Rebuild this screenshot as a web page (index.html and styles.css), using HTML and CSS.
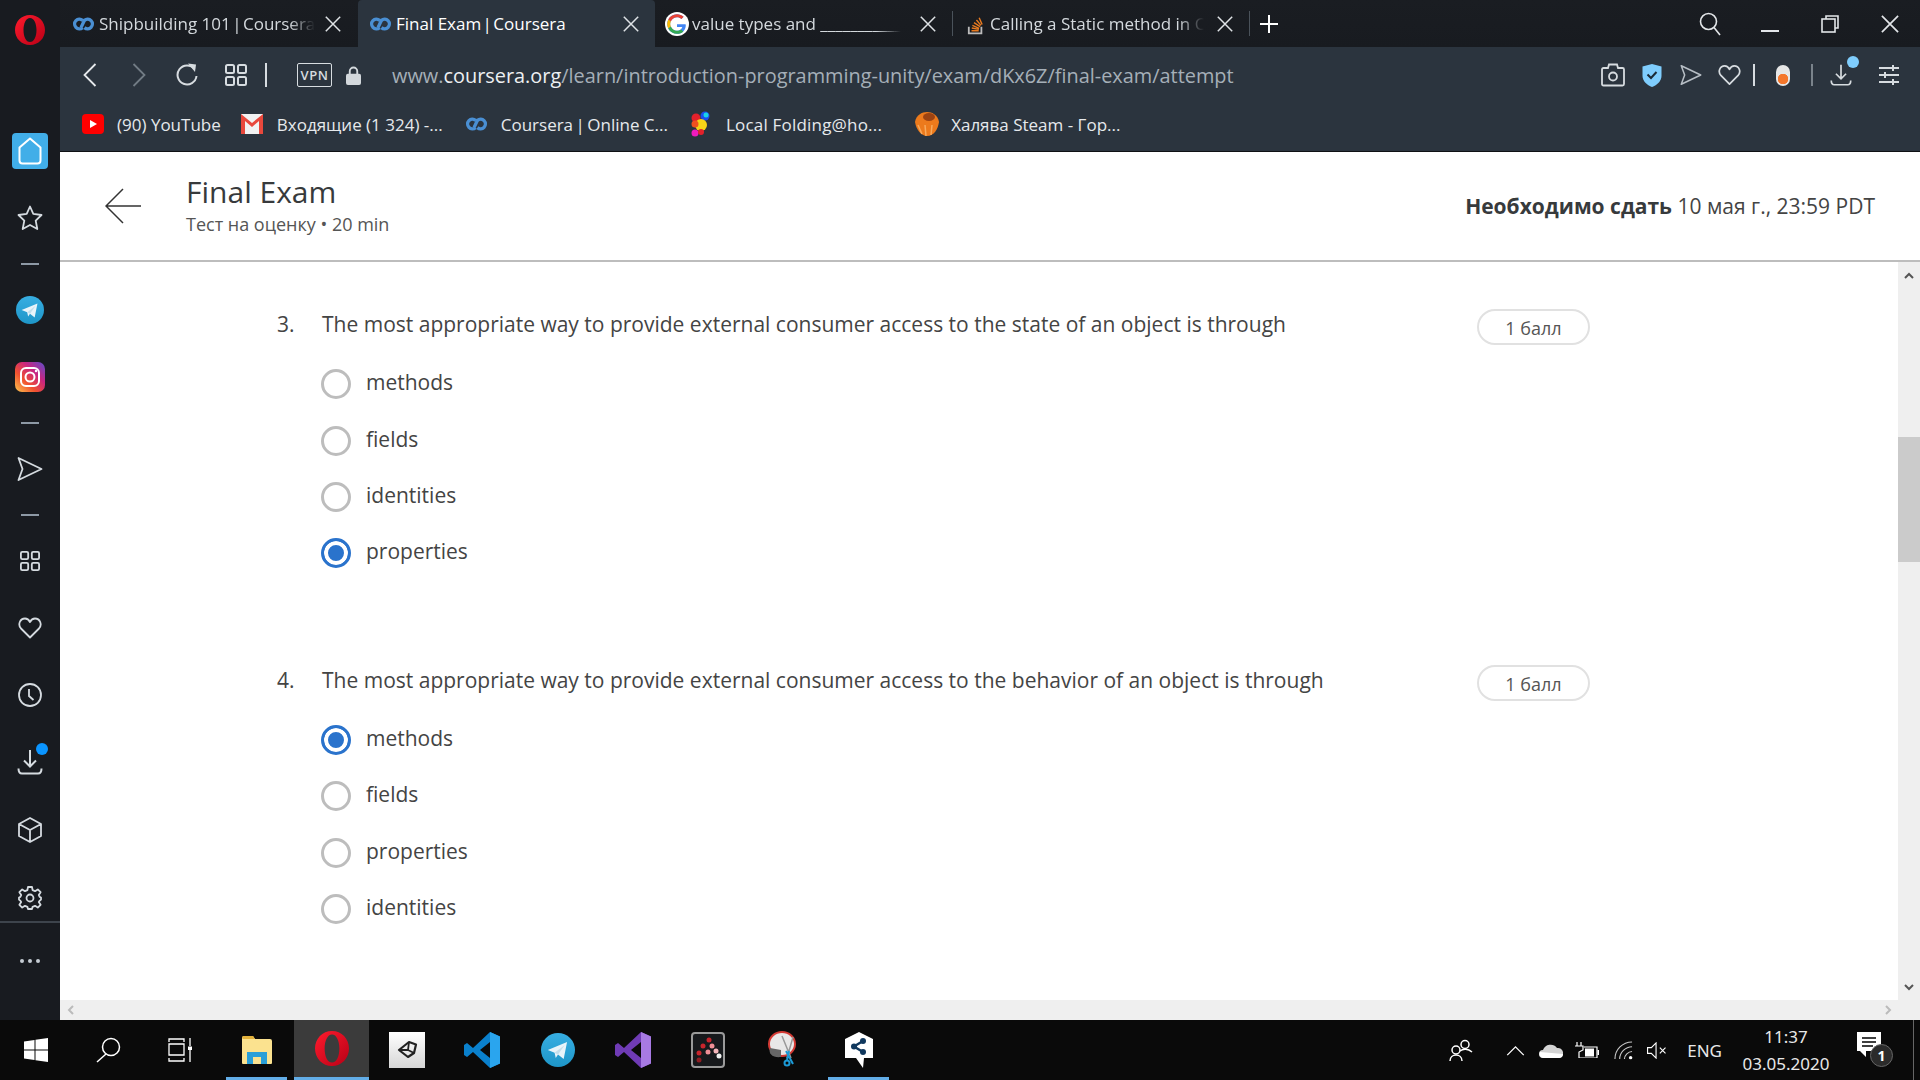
FILE: index.html
```html
<!DOCTYPE html>
<html lang="ru">
<head>
  <meta charset="UTF-8">
  <title>Final Exam | Coursera</title>
  <link rel="stylesheet" href="styles.css">
</head>
<body>
  <svg class="sprite" aria-hidden="true">
    <defs>
      <linearGradient id="teleGrad" x1="0" y1="0" x2="0" y2="1"><stop offset="0" stop-color="#37aee2"/><stop offset="1" stop-color="#1e96c8"/></linearGradient>
      <linearGradient id="instaGrad" x1="0" y1="1" x2="1" y2="0"><stop offset="0" stop-color="#fdc94f"/><stop offset=".35" stop-color="#f0512f"/><stop offset=".65" stop-color="#c9257f"/><stop offset="1" stop-color="#5a4fcf"/></linearGradient>
      <linearGradient id="operaGrad" x1="0" y1="0" x2="1" y2="1"><stop offset="0" stop-color="#ff1b2d"/><stop offset="1" stop-color="#b80016"/></linearGradient>
      <linearGradient id="unityGrad" x1="0" y1="0" x2="0" y2="1"><stop offset="0" stop-color="#fff"/><stop offset="1" stop-color="#d6d6d6"/></linearGradient>
    </defs>
    <symbol id="coursera" viewBox="0 0 24 14"><path d="M11 3.200A5 5 0 1 0 11 10.800M13 10.800A5 5 0 1 0 13 3.200L9.500 10.500" fill="none" stroke="#4a8fd3" stroke-width="3.500"/></symbol>
    <symbol id="close" viewBox="0 0 16 16"><path d="M.8.800 15.200 15.200M15.200.800.800 15.200" fill="none" stroke="currentColor" stroke-width="1.500"/></symbol>
    <symbol id="opera" viewBox="0 0 30 36" preserveAspectRatio="none"><path fill-rule="evenodd" d="M15 0C23.500 0 30 8 30 18S23.500 36 15 36 0 28 0 18 6.500 0 15 0ZM15 3.500C11 3.500 8.500 10 8.500 18S11 32.500 15 32.500 21.500 26 21.500 18 19 3.500 15 3.500Z" fill="url(#operaGrad)"/></symbol>
    <symbol id="grid" viewBox="0 0 22 22"><g fill="none" stroke="currentColor" stroke-width="2"><rect x="1" y="1" width="8" height="8" rx="1.500"/><rect x="13" y="1" width="8" height="8" rx="1.500"/><rect x="1" y="13" width="8" height="8" rx="1.500"/><rect x="13" y="13" width="8" height="8" rx="1.500"/></g></symbol>
    <symbol id="send" viewBox="0 0 26 26"><path d="M1.500 2 24.500 13 1.500 24 5.500 13Z" fill="none" stroke="currentColor" stroke-width="1.800" stroke-linejoin="round"/></symbol>
    <symbol id="heart" viewBox="0 0 24 22"><path d="M12 20.500 3 11.500C-.5 7.500 2 1.500 7 1.500 9.300 1.500 11 3 12 5 13 3 14.700 1.500 17 1.500 22 1.500 24.500 7.500 21 11.500Z" fill="none" stroke="currentColor" stroke-width="1.800" stroke-linejoin="round"/></symbol>
    <symbol id="download" viewBox="0 0 26 26"><path d="M13 1V17M7 11.500 13 17.500 19 11.500M1.500 19.500C1.500 23 3 24.500 5 24.500H21C23 24.500 24.500 23 24.500 19.500" fill="none" stroke="currentColor" stroke-width="2"/></symbol>
    <symbol id="telegram" viewBox="0 0 30 30"><circle cx="15" cy="15" r="15" fill="url(#teleGrad)"/><path d="M6 15 23 8 20 23 15 19 13 22 12 17.500Z" fill="#e8f4fa"/><path d="M12 17.500 21 10.500 15 19Z" fill="#c4dfec"/></symbol>
  </svg>

  <div class="window">
    <aside class="sidebar">
      <div class="side-logo"><svg class="logo-opera"><use href="#opera"/></svg></div>
      <div class="side-cell"><span class="home-tile"><svg width="24" height="28" viewBox="0 0 24 28"><path d="M12 1.500 22.500 10.500V23.500Q22.500 26.500 19.500 26.500H4.500Q1.500 26.500 1.500 23.500V10.500Z" fill="none" stroke="#fff" stroke-width="2" stroke-linejoin="round"/></svg></span></div>
      <div class="side-cell"><svg width="26" height="26" viewBox="0 0 26 26"><path d="M13 1.500 16.300 8.800 24.500 10 18.700 15.600 20.300 24 13 20 5.700 24 7.300 15.600 1.500 10 9.700 8.800Z" fill="none" stroke="currentColor" stroke-width="1.800" stroke-linejoin="round"/></svg></div>
      <div class="side-dash"></div>
      <div class="side-cell"><svg width="28" height="28"><use href="#telegram"/></svg></div>
      <div class="side-cell">
        <svg width="30" height="30" viewBox="0 0 30 30"><rect width="30" height="30" rx="7" fill="url(#instaGrad)"/><rect x="6" y="6" width="18" height="18" rx="5" fill="none" stroke="#fff" stroke-width="2"/><circle cx="15" cy="15" r="4.500" fill="none" stroke="#fff" stroke-width="2"/><circle cx="21" cy="9" r="1.200" fill="#fff"/></svg>
      </div>
      <div class="side-dash"></div>
      <div class="side-cell"><svg width="26" height="26"><use href="#send"/></svg></div>
      <div class="side-dash"></div>
      <div class="side-cell"><svg width="24" height="20"><use href="#grid"/></svg></div>
      <div class="side-cell"><svg width="24" height="22"><use href="#heart"/></svg></div>
      <div class="side-cell"><svg width="24" height="24" viewBox="0 0 24 24"><circle cx="12" cy="12" r="11" fill="none" stroke="currentColor" stroke-width="1.800"/><path d="M11 6V13L15.500 17" fill="none" stroke="currentColor" stroke-width="1.800"/></svg></div>
      <div class="side-cell side-dl"><svg width="26" height="26"><use href="#download"/></svg><span class="dot dot-side"></span></div>
      <div class="side-cell"><svg width="24" height="26" viewBox="0 0 24 26"><path d="M12 1 23 7V19L12 25 1 19V7ZM1 7 12 13 23 7M12 13V25" fill="none" stroke="currentColor" stroke-width="1.800" stroke-linejoin="round"/></svg></div>
      <div class="side-cell side-gear"><svg width="24" height="24" viewBox="0 0 24 24"><circle cx="12" cy="12" r="3.500" fill="none" stroke="currentColor" stroke-width="1.800"/><path d="M10 1H14L14.600 4.200 17 5.200 19.800 3.400 22.600 6.200 20.800 9 21.800 11 23 11.500V13.500L21.800 14.600 20.800 16 22.600 18.800 19.800 21.600 17 19.800 14.600 20.800 14 23H10L9.400 20.800 7 19.800 4.200 21.600 1.400 18.800 3.200 16 2.200 14.600 1 13.500V11.500L2.200 11 3.200 9 1.400 6.200 4.200 3.400 7 5.200 9.400 4.200Z" fill="none" stroke="currentColor" stroke-width="1.800" stroke-linejoin="round"/></svg></div>
      <div class="side-more"><span></span><span></span><span></span></div>
    </aside>

    <div class="main">
      <div class="tabbar">
        <div class="tab tab-first">
          <svg class="favicon-co"><use href="#coursera"/></svg>
          <span class="tab-title fade">Shipbuilding 101 <span class="pipe">|</span> Coursera</span>
          <svg class="tab-close"><use href="#close"/></svg>
        </div>
        <div class="tab tab-active">
          <svg class="favicon-co"><use href="#coursera"/></svg>
          <span class="tab-title">Final Exam <span class="pipe">|</span> Coursera</span>
          <svg class="tab-close"><use href="#close"/></svg>
        </div>
        <div class="tab tab-google">
          <svg class="favicon-g" viewBox="0 0 24 24">
            <circle cx="12" cy="12" r="12" fill="#fff"/>
            <path d="M20.500 12.200H12V15H17.300C16.700 17.400 14.600 18.800 12 18.800 8.300 18.800 5.200 15.800 5.200 12S8.300 5.200 12 5.200C13.700 5.200 15.200 5.800 16.400 6.900L18.600 4.800C16.900 3.100 14.600 2.200 12 2.200 6.600 2.200 2.200 6.600 2.200 12S6.600 21.800 12 21.800C17.400 21.800 20.800 18 20.800 13.200 20.800 12.800 20.700 12.500 20.500 12.200Z" fill="#4285f4"/>
            <path d="M3.300 7.500 5.900 9.500C6.800 7 9.200 5.200 12 5.200 13.700 5.200 15.200 5.800 16.400 6.900L18.600 4.800C16.900 3.100 14.600 2.200 12 2.200 8.200 2.200 4.900 4.300 3.300 7.500Z" fill="#ea4335"/>
            <path d="M3.300 7.500C2.600 8.900 2.200 10.400 2.200 12S2.600 15.100 3.300 16.500L5.900 14.500C5.400 13.700 5.200 12.900 5.200 12S5.400 10.300 5.900 9.500Z" fill="#fbbc05"/>
            <path d="M3.300 16.500C4.900 19.700 8.200 21.800 12 21.800 14.600 21.800 16.800 20.900 18.400 19.400L16 17.400C14.900 18.300 13.500 18.800 12 18.800 9.200 18.800 6.800 17 5.900 14.500Z" fill="#34a853"/>
          </svg>
          <span class="tab-title fade">value types and ____________</span>
          <svg class="tab-close"><use href="#close"/></svg>
          <span class="tab-sep"></span>
        </div>
        <div class="tab tab-so">
          <svg class="favicon-so" viewBox="0 0 20 24"><path d="M2 15V22.500H16V15" fill="none" stroke="#bcbbbb" stroke-width="2"/><path d="M5 19.500H13M5.300 16.500 13.200 18M6 13.500 13.500 16.800M7.800 10.500 14.500 15M10.500 7.500 15.500 13.500M13.500 5 16.800 12.500" fill="none" stroke="#e87a20" stroke-width="1.600"/></svg>
          <span class="tab-title fade">Calling a Static method in C</span>
          <svg class="tab-close"><use href="#close"/></svg>
          <span class="tab-sep"></span>
        </div>
        <svg class="tab-plus" viewBox="0 0 18 18"><path d="M9 0V18M0 9H18" stroke="#fff" stroke-width="2"/></svg>
        <div class="window-controls">
          <svg class="wc-search" viewBox="0 0 22 24"><circle cx="9.500" cy="9.500" r="8" fill="none" stroke="currentColor" stroke-width="1.600"/><path d="M15 15.500 21 23" stroke="currentColor" stroke-width="1.600"/></svg>
          <span class="wc-cell"><span class="wc-min"></span></span>
          <span class="wc-cell"><svg width="18" height="18" viewBox="0 0 18 18"><path d="M5 4V1H17V13H14" fill="none" stroke="currentColor" stroke-width="1.600"/><rect x="1" y="4" width="13" height="13" fill="none" stroke="currentColor" stroke-width="1.600"/></svg></span>
          <span class="wc-cell"><svg width="18" height="18"><use href="#close"/></svg></span>
        </div>
      </div>

      <div class="toolbar">
        <div class="addr-row">
          <span class="tool"><svg width="14" height="24" viewBox="0 0 14 24"><path d="M12.500 1 1.500 12 12.500 23" fill="none" stroke="#e6e9ec" stroke-width="1.800"/></svg></span>
          <span class="tool tool-dim"><svg width="14" height="24" viewBox="0 0 14 24"><path d="M1.500 1 12.500 12 1.500 23" fill="none" stroke="currentColor" stroke-width="1.800"/></svg></span>
          <span class="tool"><svg width="22" height="24" viewBox="0 0 22 24"><path d="M18.500 6A9.500 9.500 0 1 0 20.500 13" fill="none" stroke="currentColor" stroke-width="2"/><path d="M12 .500 20 1.500 19 9Z" fill="currentColor"/></svg></span>
          <span class="tool"><svg width="22" height="22"><use href="#grid"/></svg></span>
          <span class="bar-sep"></span>
          <span class="vpn">VPN</span>
          <svg class="lock" viewBox="0 0 16 20"><path d="M4 9V5.500A4 4 0 0 1 12 5.500V9" fill="none" stroke="#d3d8dc" stroke-width="2"/><rect y="8" width="16" height="12" rx="2" fill="#d3d8dc"/></svg>
          <span class="url">www.<b>coursera.org</b>/learn/introduction-programming-unity/exam/dKx6Z/final-exam/attempt</span>
          <div class="addr-tools">
            <span class="atool"><svg width="24" height="24" viewBox="0 0 24 24"><path d="M2.500 5H7L8 1.500H16L17 5H21.500Q23 5 23 6.500V21Q23 22.500 21.500 22.500H2.500Q1 22.500 1 21V6.500Q1 5 2.500 5Z" fill="none" stroke="currentColor" stroke-width="1.800"/><circle cx="12" cy="13.500" r="4" fill="none" stroke="currentColor" stroke-width="1.800"/></svg></span>
            <span class="atool"><svg width="20" height="24" viewBox="0 0 20 24"><path d="M10 1 19.500 3.500V13C19.500 18 15 22 10 24 5 22 .5 18 .5 13V3.500Z" fill="#7fcdfd"/><path d="M5.500 11.500 9 15 14.500 9" fill="none" stroke="#1c2a36" stroke-width="2"/></svg></span>
            <span class="atool atool-dim"><svg width="22" height="22"><use href="#send"/></svg></span>
            <span class="atool"><svg width="23" height="22"><use href="#heart"/></svg></span>
            <span class="a-sep"></span>
            <span class="toggle-cell"><span class="toggle"></span></span>
            <span class="a-sep a-sep-dim"></span>
            <span class="dl-cell"><svg width="22" height="24"><use href="#download"/></svg><span class="dot dot-top"></span></span>
            <span class="slider-cell"><svg width="20" height="20" viewBox="0 0 20 20"><path d="M0 3H20M0 10H20M0 17H20" stroke="currentColor" stroke-width="2"/><path d="M14 0V6M6 7V13M14 14V20" stroke="currentColor" stroke-width="2"/></svg></span>
          </div>
        </div>
        <div class="bookmarks">
          <span class="bm bm-yt">
            <svg width="22" height="20" viewBox="0 0 22 20"><rect width="22" height="20" rx="4" fill="#f00"/><path d="M8 6 15 10 8 14Z" fill="#fff"/></svg>
            <span>(90) YouTube</span>
          </span>
          <span class="bm bm-mail">
            <svg width="22" height="20" viewBox="0 0 22 20"><rect width="22" height="20" fill="#f2f2f2"/><path d="M0 0 11 9 22 0V20H18V7L11 13 4 7V20H0Z" fill="#e8483c"/></svg>
            <span>Входящие (1 324) -...</span>
          </span>
          <span class="bm bm-co">
            <svg class="favicon-co"><use href="#coursera"/></svg>
            <span>Coursera <span class="pipe">|</span> Online C...</span>
          </span>
          <span class="bm bm-fold">
            <svg width="20" height="26" viewBox="0 0 20 26"><circle cx="6" cy="7" r="4.500" fill="#e3212b"/><circle cx="15" cy="5" r="4.500" fill="#1b4ff0"/><circle cx="16" cy="4" r="2.500" fill="#19d3e8"/><circle cx="11" cy="14" r="6" fill="#f7d417"/><circle cx="5" cy="13" r="3.500" fill="#f2501f"/><circle cx="5" cy="22" r="3.500" fill="#f01bbe"/><circle cx="11" cy="21" r="3" fill="#e3212b"/></svg>
            <span>Local Folding@ho...</span>
          </span>
          <span class="bm bm-free">
            <svg width="26" height="26" viewBox="0 0 26 26"><path d="M1 11C2 4 8 1 13 1S24 4 25 11C24 18 20 25 13 25 7 25 2 18 1 11Z" fill="#ec7a1c"/><ellipse cx="15" cy="6" rx="6" ry="4" fill="#9c4312"/><path d="M4 14 8 23M11 14 12 25M18 14 17 24" stroke="#f7a95b" stroke-width="1.500"/></svg>
            <span>Халява Steam - Гор...</span>
          </span>
        </div>
      </div>

      <div class="page">
        <header class="page-head">
          <svg class="back" viewBox="0 0 36 36"><path d="M18 1 1 18 18 35M1 18H36" fill="none" stroke="#333" stroke-width="1.500"/></svg>
          <div class="head-text">
            <h1>Final Exam</h1>
            <p>Тест на оценку • 20 min</p>
          </div>
          <div class="due"><b>Необходимо сдать</b> 10 мая г., 23:59 PDT</div>
        </header>

        <div class="page-body">
          <div class="scroll-area">
            <div class="content">
              <section class="question">
                <div class="q-head">
                  <span class="q-num">3.</span>
                  <span class="q-text">The most appropriate way to provide external consumer access to the state of an object is through</span>
                  <span class="points">1 балл</span>
                </div>
                <label class="option"><input type="radio" name="q3"><span>methods</span></label>
                <label class="option"><input type="radio" name="q3"><span>fields</span></label>
                <label class="option"><input type="radio" name="q3"><span>identities</span></label>
                <label class="option"><input type="radio" name="q3" checked><span>properties</span></label>
              </section>
              <section class="question">
                <div class="q-head">
                  <span class="q-num">4.</span>
                  <span class="q-text">The most appropriate way to provide external consumer access to the behavior of an object is through</span>
                  <span class="points">1 балл</span>
                </div>
                <label class="option"><input type="radio" name="q4" checked><span>methods</span></label>
                <label class="option"><input type="radio" name="q4"><span>fields</span></label>
                <label class="option"><input type="radio" name="q4"><span>properties</span></label>
                <label class="option"><input type="radio" name="q4"><span>identities</span></label>
              </section>
            </div>
            <div class="vscroll">
              <svg class="arrow-v" viewBox="0 0 10 7"><path d="M1 6 5 2 9 6" fill="none" stroke="#555" stroke-width="2"/></svg>
              <span class="thumb"></span>
              <svg class="arrow-v arrow-end" viewBox="0 0 10 7"><path d="M1 1 5 5 9 1" fill="none" stroke="#555" stroke-width="2"/></svg>
            </div>
          </div>
          <div class="hscroll">
            <svg class="arrow-h" viewBox="0 0 7 10"><path d="M6 1 2 5 6 9" fill="none" stroke="#bbb" stroke-width="2"/></svg>
            <svg class="arrow-h" viewBox="0 0 7 10"><path d="M1 1 5 5 1 9" fill="none" stroke="#bbb" stroke-width="2"/></svg>
          </div>
        </div>
      </div>
    </div>
  </div>

  <footer class="taskbar">
    <span class="sys sys-win"><svg width="24" height="24" viewBox="0 0 24 24"><path d="M0 3.500 10.500 2V11.500H0ZM11.500 1.800 24 0V11.500H11.500ZM0 12.500H10.500V22L0 20.500ZM11.500 12.500H24V24L11.500 22.200Z" fill="#fff"/></svg></span>
    <span class="sys"><svg width="26" height="26" viewBox="0 0 26 26"><circle cx="16" cy="10" r="8.500" fill="none" stroke="#fff" stroke-width="1.500"/><path d="M11 17 2 25" stroke="#fff" stroke-width="1.500"/></svg></span>
    <span class="sys"><svg width="24" height="24" viewBox="0 0 24 24"><path d="M1 4V1H16V4M1 6H16V17H1ZM1 20V23H16V20M22 0V8M22 12V24" fill="none" stroke="#fff" stroke-width="1.300"/><rect x="20" y="8.500" width="4" height="3.500" fill="#fff"/></svg></span>
    <div class="apps">
      <span class="app app-open">
        <svg width="32" height="30" viewBox="0 0 32 30"><path d="M1 3Q1 1 3 1H12L14 4H29Q31 4 31 6V28Q31 29 30 29H2Q1 29 1 28Z" fill="#fbe28f"/><path d="M1 3Q1 1 3 1H12L14 4H2Z" fill="#e3b23c"/><path d="M6 29V17H26V29H20V22H12V29Z" fill="#2a9fd8"/></svg>
      </span>
      <span class="app app-active"><svg class="logo-opera-task"><use href="#opera"/></svg></span>
      <span class="app">
        <svg width="36" height="36" viewBox="0 0 36 36"><rect width="36" height="36" fill="url(#unityGrad)"/><path d="M20 10 27 12.500 25 21 19 25 10 18Z" fill="none" stroke="#222" stroke-width="2.200" stroke-linejoin="round"/><path d="M10 18H19L20 10M19 18 25 21" fill="none" stroke="#222" stroke-width="1.800"/></svg>
      </span>
      <span class="app">
        <svg width="36" height="36" viewBox="0 0 36 36"><path d="M26 0 36 4.500V31.500L26 36 9 20 3 25 0 23V13L3 11 9 16ZM26 10 16 18 26 26Z" fill="#0a80cc"/><path d="M26 0 36 4.500V31.500L26 36Z" fill="#2aa5ee"/></svg>
      </span>
      <span class="app"><svg width="34" height="34"><use href="#telegram"/></svg></span>
      <span class="app">
        <svg width="36" height="36" viewBox="0 0 36 36"><path d="M26 0 36 4.500V31.500L26 36 9 20 3 25 0 23V13L3 11 9 16ZM26 10 16 18 26 26Z" fill="#6f3bb5"/><path d="M26 0 36 4.500V31.500L26 36Z" fill="#a77ae3"/></svg>
      </span>
      <span class="app">
        <svg width="34" height="36" viewBox="0 0 34 36"><rect x="1" y="1" width="32" height="34" rx="3" fill="#17191c" stroke="#9a9a9a" stroke-width="2"/><circle cx="18" cy="8" r="2.500" fill="#c9252c"/><circle cx="12" cy="14" r="2.500" fill="#c9252c"/><circle cx="21" cy="14" r="2.500" fill="#ef8f96"/><circle cx="8" cy="21" r="2.500" fill="#c9252c"/><circle cx="17" cy="20" r="2.500" fill="#ef8f96"/><circle cx="25" cy="19" r="2.500" fill="#f6b6bb"/><circle cx="8" cy="28" r="2.500" fill="#8f1d22"/><circle cx="28" cy="24" r="2.500" fill="#f1f1f1"/></svg>
      </span>
      <span class="app">
        <svg width="34" height="38" viewBox="0 0 34 38"><ellipse cx="15" cy="13" rx="13" ry="12" fill="#e8e8e8" stroke="#d43a34" stroke-width="2"/><path d="M3 17C1 23 6 27 14 26L14 19Z" fill="#666"/><path d="M15 5 24 27M26 6 20 27" stroke="#999" stroke-width="1.500"/><circle cx="20" cy="32" r="2.500" fill="none" stroke="#1c9ad6" stroke-width="2"/><path d="M22 20 20 29M19 20 26 33" stroke="#1c9ad6" stroke-width="2" fill="none"/></svg>
      </span>
      <span class="app app-open">
        <svg width="28" height="36" viewBox="0 0 28 36"><path d="M14 0 28 7V26L19 26 18 36 11 26 0 26V7Z" fill="#fff"/><path d="M18 9 9 14.500 18 20" fill="none" stroke="#10385e" stroke-width="2.500"/><circle cx="18" cy="9" r="3" fill="#10385e"/><circle cx="9" cy="14.500" r="3" fill="#10385e"/><circle cx="18" cy="20" r="3" fill="#10385e"/></svg>
      </span>
    </div>
    <div class="tray">
      <svg class="tray-people" viewBox="0 0 24 24"><circle cx="16" cy="6.500" r="4" fill="none" stroke="#fff" stroke-width="1.500"/><path d="M11 13C14 10.500 19 10.500 23 14" fill="none" stroke="#fff" stroke-width="1.500"/><circle cx="7" cy="12" r="4" fill="none" stroke="#fff" stroke-width="1.500"/><path d="M1 23C1 15 13 15 13 23" fill="none" stroke="#fff" stroke-width="1.500"/></svg>
      <svg class="tray-chev" viewBox="0 0 20 12"><path d="M1 11 10 2 19 11" fill="none" stroke="#fff" stroke-width="1.400"/></svg>
      <svg class="tray-cloud" viewBox="0 0 24 16"><path d="M4 16A4 4 0 0 1 4 8 8 8 0 0 1 18 6 5 5 0 0 1 20 16Z" fill="#d4d4d4"/><path d="M4 16A4 4 0 0 1 1 10L24 12Q24 16 20 16Z" fill="#fff"/></svg>
      <svg class="tray-batt" viewBox="0 0 24 16"><path d="M2 0V4M6 0V4M0 4H8V8L4 10V16H22V5H9" fill="none" stroke="#fff" stroke-width="1.200"/><rect x="10" y="6.500" width="9" height="8" fill="#fff"/><rect x="22.500" y="8" width="1.500" height="5" fill="#fff"/></svg>
      <svg class="tray-wifi" viewBox="0 0 20 20"><path d="M1 19C1 9 9 1 19 1M6 19C6 12 12 6 19 6M11 19C11 15 15 11 19 11" fill="none" stroke="#c8c8c8" stroke-width="1.200"/><circle cx="17.500" cy="17.500" r="1.800" fill="#fff"/></svg>
      <svg class="tray-vol" viewBox="0 0 22 18"><path d="M1 6H5L10 1V17L5 12H1Z" fill="none" stroke="#fff" stroke-width="1.200"/><path d="M14 6 20 12M20 6 14 12" stroke="#fff" stroke-width="1.200"/></svg>
      <span class="tray-lang">ENG</span>
      <div class="clock"><span>11:37</span><span>03.05.2020</span></div>
      <div class="notif">
        <svg width="25" height="25" viewBox="0 0 25 25"><path d="M0 0H24V19H9V25L3 19H0Z" fill="#fff"/><path d="M5 6H19M5 10H19M5 14H16" stroke="#000" stroke-width="1.400"/></svg>
        <span class="notif-count">1</span>
      </div>
    </div>
    <span class="task-edge"></span>
  </footer>
</body>
</html>
```

FILE: styles.css
```css
html, body {
  margin: 0;
  padding: 0;
  height: 100%;
  overflow: hidden;
}

body {
  width: 1920px;
  height: 1080px;
  font-family: "Open Sans", "Noto Sans", sans-serif;
  background: #181b20;
}

.sprite {
  position: absolute;
  width: 0;
  height: 0;
}

.window {
  display: flex;
  height: 1020px;
}

/* sidebar */
.sidebar {
  width: 60px;
  flex: none;
  background: #181b20;
  color: #d5dbe0;
  display: flex;
  flex-direction: column;
  align-items: center;
}

.side-logo {
  height: 117px;
  padding-top: 15px;
  box-sizing: border-box;
  flex: none;
}

.logo-opera {
  width: 30px;
  height: 30px;
  display: block;
}

.side-cell {
  height: 67px;
  width: 100%;
  flex: none;
  display: flex;
  align-items: center;
  justify-content: center;
  position: relative;
}

.side-dl {
  height: 68px;
}

.side-gear {
  height: 58px;
  box-sizing: border-box;
  padding-top: 23px;
  align-items: flex-start;
}

.home-tile {
  width: 36px;
  height: 36px;
  border-radius: 4px;
  background: #41aee8;
  display: flex;
  align-items: center;
  justify-content: center;
}

.side-dash {
  flex: none;
  width: 18px;
  height: 25px;
  background: linear-gradient(#8d99a5, #8d99a5) center / 18px 2px no-repeat;
}

.side-more {
  flex: none;
  width: 100%;
  height: 76px;
  border-top: 2px solid #3d444c;
  display: flex;
  align-items: center;
  justify-content: center;
  gap: 4px;
}

.side-more span {
  width: 4px;
  height: 4px;
  border-radius: 50%;
  background: #c5ccd3;
}

.dot {
  position: absolute;
  border-radius: 50%;
}

.dot-side {
  width: 12px;
  height: 12px;
  background: #0a95ff;
  top: 15px;
  right: 12px;
}

/* tabs */
.main {
  flex: 1;
  min-width: 0;
  display: flex;
  flex-direction: column;
}

.tabbar {
  height: 47px;
  flex: none;
  display: flex;
  align-items: stretch;
  background: linear-gradient(#1a1d22, #181b20);
  color: #dfe3e6;
  font-size: 17px;
}

.pipe {
  margin: 0 -3px;
}

.bm .pipe {
  margin: 0 -2px;
}

.tab {
  position: relative;
  display: flex;
  align-items: center;
  box-sizing: border-box;
  flex: none;
  color: #d4d9dd;
}

.tab-first {
  width: 298px;
  padding-left: 12px;
}

.tab-active {
  width: 297px;
  padding-left: 11px;
  background: #2b343e;
  border-radius: 4px 4px 0 0;
  color: #fff;
}

.tab-google {
  width: 298px;
  padding-left: 10px;
}

.tab-so {
  width: 297px;
  padding-left: 14px;
}

.favicon-co {
  width: 23px;
  height: 14px;
  flex: none;
}

.favicon-g {
  width: 24px;
  height: 24px;
  flex: none;
}

.favicon-so {
  width: 18px;
  height: 24px;
  flex: none;
}

.tab-title {
  margin-left: 4px;
  white-space: nowrap;
  overflow: hidden;
  width: 216px;
}

.tab-google .tab-title {
  margin-left: 3px;
  width: 209px;
}

.tab-so .tab-title {
  margin-left: 5px;
  width: 214px;
}

.fade {
  -webkit-mask-image: linear-gradient(90deg, #000 88%, transparent);
  mask-image: linear-gradient(90deg, #000 88%, transparent);
}

.tab-close {
  position: absolute;
  right: 17px;
  top: 16px;
  width: 16px;
  height: 16px;
  color: #dfe3e6;
}

.tab-active .tab-close {
  right: 16px;
}

.tab-sep {
  position: absolute;
  right: 0;
  top: 11px;
  height: 25px;
  width: 1px;
  background: #4a525a;
}

.tab-plus {
  width: 18px;
  height: 18px;
  align-self: center;
  margin-left: 10px;
}

.window-controls {
  margin-left: auto;
  display: flex;
  align-items: center;
  color: #e3e6e9;
}

.wc-search {
  width: 22px;
  height: 24px;
  margin-right: 19px;
}

.wc-cell {
  width: 60px;
  display: flex;
  align-items: center;
  justify-content: center;
}

.wc-min {
  display: block;
  width: 18px;
  height: 2px;
  background: #e3e6e9;
  margin-top: 14px;
}

/* toolbar */
.toolbar {
  height: 104px;
  background: #2b343e;
  border-bottom: 1px solid #0f1114;
  color: #d7dce0;
  flex: none;
}

.addr-row {
  height: 56px;
  display: flex;
  align-items: center;
  padding-left: 6px;
}

.tool {
  width: 48.500px;
  display: flex;
  justify-content: center;
  flex: none;
}

.tool-dim {
  color: #727c85;
}

.bar-sep {
  width: 2px;
  height: 24px;
  background: #d7dce0;
  margin-left: 5px;
  flex: none;
}

.vpn {
  margin-left: 30px;
  width: 35px;
  height: 24px;
  box-sizing: border-box;
  border: 1px solid #d7dce0;
  border-radius: 2px;
  font-size: 13px;
  font-weight: 600;
  letter-spacing: .5px;
  line-height: 22px;
  text-align: center;
  flex: none;
}

.lock {
  width: 15px;
  height: 19px;
  margin-left: 14px;
  flex: none;
}

.url {
  margin-left: 31px;
  font-size: 19.900px;
  color: #a5afb8;
  white-space: nowrap;
}

.url b {
  font-weight: 400;
  color: #eef0f2;
}

.addr-tools {
  margin-left: auto;
  display: flex;
  align-items: center;
  padding-right: 11px;
  color: #d7dce0;
}

.atool {
  width: 39px;
  display: flex;
  justify-content: center;
  flex: none;
}

.atool-dim {
  color: #b7bec5;
}

.a-sep {
  width: 2px;
  height: 22px;
  background: #d7dce0;
  margin-left: 4px;
}

.a-sep-dim {
  background: #7a838b;
  margin-left: 0;
}

.toggle-cell {
  width: 56px;
  display: flex;
  justify-content: center;
}

.toggle {
  display: block;
  width: 14px;
  height: 21px;
  border-radius: 7px;
  background: radial-gradient(circle at 50% 14px, #f4772c 5px, transparent 5.500px), #e6e6e6;
}

.dl-cell {
  position: relative;
  width: 56px;
  display: flex;
  justify-content: center;
}

.dot-top {
  width: 12px;
  height: 12px;
  top: -7px;
  right: 10px;
  background: #7fcdfd;
}

.slider-cell {
  width: 40px;
  display: flex;
  justify-content: center;
}

.bookmarks {
  height: 42px;
  display: flex;
  align-items: center;
  font-size: 17px;
  color: #e6e9ec;
  white-space: nowrap;
}

.bm {
  display: flex;
  align-items: center;
  flex: none;
}

.bm-yt {
  margin-left: 22px;
  gap: 13px;
}

.bm-mail {
  margin-left: 20px;
  gap: 14px;
}

.bm-co {
  margin-left: 22px;
  gap: 13px;
}

.bm-fold {
  margin-left: 22px;
  gap: 16px;
  letter-spacing: .2px;
}

.bm-free {
  margin-left: 32px;
  gap: 11px;
}

/* page */
.page {
  flex: 1;
  min-height: 0;
  background: #fff;
  display: flex;
  flex-direction: column;
  color: #373a3c;
}

.page-head {
  height: 110px;
  flex: none;
  box-sizing: border-box;
  border-bottom: 2px solid #bdbdbd;
  display: flex;
  align-items: center;
  padding: 0 45px;
}

.back {
  width: 36px;
  height: 36px;
  flex: none;
}

.head-text {
  margin-left: 45px;
  padding-bottom: 2px;
}

.head-text h1 {
  margin: 0;
  font-size: 30px;
  font-weight: 400;
  line-height: 38px;
  color: #373a3c;
}

.head-text p {
  margin: 0;
  font-size: 18px;
  line-height: 26px;
  color: #555;
}

.due {
  margin-left: auto;
  font-size: 21px;
  color: #444;
}

.due b {
  font-weight: 700;
  color: #373a3c;
}

.page-body {
  flex: 1;
  min-height: 0;
  display: flex;
  flex-direction: column;
}

.scroll-area {
  flex: 1;
  min-height: 0;
  display: flex;
}

.content {
  flex: 1;
  min-width: 0;
  padding: 40px 0 0 217px;
  overflow: hidden;
}

.question {
  width: 1313px;
  margin-bottom: 76px;
}

.q-head {
  height: 44px;
  display: flex;
  align-items: flex-start;
  font-size: 21px;
  line-height: 44px;
  margin-bottom: 10px;
  color: #444;
}

.q-num {
  width: 45px;
  flex: none;
}

.points {
  margin-left: auto;
  margin-top: 7px;
  width: 113px;
  height: 36px;
  box-sizing: border-box;
  border: 2px solid #e1e1e1;
  border-radius: 18px;
  font-size: 18px;
  line-height: 35px;
  text-align: center;
  color: #555;
}

.option {
  height: 56.400px;
  display: flex;
  align-items: center;
  gap: 15px;
  margin-left: 44px;
  font-size: 21px;
  color: #444;
}

.option span {
  margin-bottom: 4px;
}

.option input {
  appearance: none;
  -webkit-appearance: none;
  margin: 0;
  width: 30px;
  height: 30px;
  flex: none;
  box-sizing: border-box;
  border: 3px solid #bdbdbd;
  border-radius: 50%;
  background: #fff;
}

.option input:checked {
  border-color: #2a73cc;
  background: #2a73cc;
  box-shadow: inset 0 0 0 4px #fff;
}

.vscroll {
  width: 22px;
  flex: none;
  background: #efefef;
  display: flex;
  flex-direction: column;
  align-items: center;
}

.arrow-v {
  width: 10px;
  height: 7px;
  margin-top: 10px;
  flex: none;
}

.arrow-end {
  margin-top: auto;
  margin-bottom: 9px;
}

.thumb {
  width: 100%;
  height: 125px;
  margin-top: 158px;
  background: #cbcbcb;
  flex: none;
}

.hscroll {
  height: 20px;
  flex: none;
  background: #efefef;
  display: flex;
  align-items: center;
  justify-content: space-between;
  padding: 0 28px 0 7px;
}

.arrow-h {
  width: 7px;
  height: 10px;
}

/* taskbar */
.taskbar {
  position: relative;
  height: 60px;
  background: #0a0a0a;
  display: flex;
  align-items: center;
  color: #fff;
}

.sys {
  width: 72px;
  display: flex;
  justify-content: center;
  flex: none;
}

.apps {
  display: flex;
  height: 100%;
  margin-left: 3px;
}

.app {
  width: 75px;
  display: flex;
  align-items: center;
  justify-content: center;
  box-sizing: border-box;
  flex: none;
  margin-right: 0.300px;
}

.app-open {
  background: linear-gradient(#62ade7, #62ade7) center bottom / 61px 3px no-repeat;
}

.app-active {
  background: #3b3b3b;
  border-bottom: 3px solid #62ade7;
}

.logo-opera-task {
  width: 34px;
  height: 35px;
}

.tray {
  margin-left: auto;
  margin-right: 27px;
  display: flex;
  align-items: center;
  height: 100%;
}

.tray-people {
  width: 24px;
  height: 24px;
}

.tray-chev {
  width: 19px;
  height: 11px;
  margin-left: 33px;
}

.tray-cloud {
  width: 24px;
  height: 16px;
  margin-left: 14px;
}

.tray-batt {
  width: 24px;
  height: 16px;
  margin-left: 12px;
}

.tray-wifi {
  width: 19px;
  height: 19px;
  margin-left: 15px;
}

.tray-vol {
  width: 22px;
  height: 17px;
  margin-left: 13px;
}

.tray-lang {
  font-family: "Noto Sans", sans-serif;
  font-size: 17px;
  margin-left: 19px;
  color: #e8e8e8;
}

.clock {
  width: 110px;
  margin-left: 9px;
  display: flex;
  flex-direction: column;
  align-items: center;
  font-family: "Noto Sans", sans-serif;
  font-size: 17px;
  line-height: 27px;
  color: #e8e8e8;
}

.notif {
  position: relative;
  margin-left: 16px;
  width: 36px;
  height: 36px;
}

.notif svg {
  display: block;
}

.notif-count {
  position: absolute;
  left: 13px;
  top: 12px;
  width: 23px;
  height: 23px;
  box-sizing: border-box;
  border: 1px solid #666;
  border-radius: 50%;
  background: #2b2b2b;
  font-size: 14px;
  font-weight: 700;
  line-height: 21px;
  text-align: center;
}

.task-edge {
  position: absolute;
  right: 6px;
  top: 0;
  width: 1px;
  height: 100%;
  background: #666;
}
```
